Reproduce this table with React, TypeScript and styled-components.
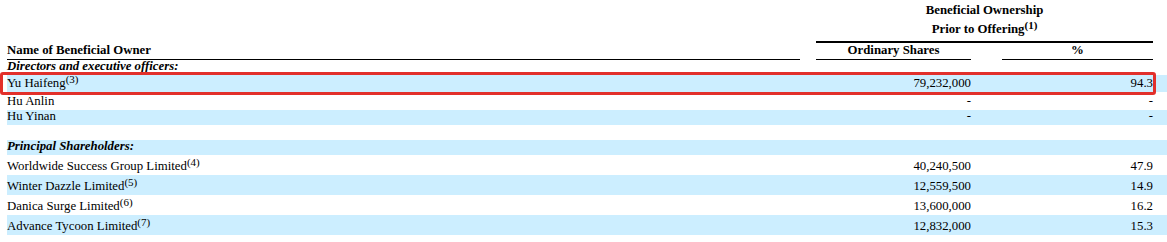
import React from "react";
import styled, { createGlobalStyle } from "styled-components";

const Global = createGlobalStyle`
  html, body { margin: 0; padding: 0; background: #fff; }
  body { font-family: "Liberation Serif", "Times New Roman", serif; color: #000; }
`;

const Page = styled.div`
  position: relative;
  padding: 0 0 0 7px;
  width: 1160px;
`;

const Table = styled.table`
  width: 1160px;
  border-collapse: collapse;
  border-spacing: 0;
  font-size: 12.8px;
  line-height: 15px;
  table-layout: fixed;
`;

const Cell = styled.td<{ $align?: "left" | "right" | "center"; $bold?: boolean; $italic?: boolean }>`
  padding: 0;
  vertical-align: bottom;
  text-align: ${(p) => p.$align ?? "left"};
  font-weight: ${(p) => (p.$bold ? 700 : 400)};
  font-style: ${(p) => (p.$italic ? "italic" : "normal")};
  white-space: nowrap;
`;

const HeadCell = styled(Cell)<{ $rule?: number }>`
  padding-bottom: 1px;
  border-bottom: ${(p) => (p.$rule ? `${p.$rule}px solid #000` : "none")};
`;

const TopHead = styled(HeadCell)`
  padding: 3px 0 4px;
`;

const HeadLine = styled.span<{ $tall?: boolean }>`
  display: block;
  padding-top: ${(p) => (p.$tall ? "4px" : "0")};
`;

const Row = styled.tr<{ $shaded?: boolean; $h: number }>`
  height: ${(p) => p.$h}px;
  background: ${(p) => (p.$shaded ? "#cceeff" : "transparent")};
  & > td {
    line-height: 13px;
    padding-bottom: 2px;
  }
`;

const Sup = styled.sup`
  font-size: 11px;
  line-height: 0;
  vertical-align: 4px;
`;

const Highlight = styled.div`
  position: absolute;
  left: 0;
  top: 72px;
  width: 1156px;
  height: 23px;
  box-sizing: border-box;
  border: 3px solid #e2302b;
  border-radius: 3px;
  pointer-events: none;
`;

type Holder = { name: string; note?: string; shares: string; pct: string; h: number };

const directors: Holder[] = [
  { name: "Yu Haifeng", note: "(3)", shares: "79,232,000", pct: "94.3", h: 17 },
  { name: "Hu Anlin", shares: "-", pct: "-", h: 18 },
  { name: "Hu Yinan", shares: "-", pct: "-", h: 15 },
];

const principals: Holder[] = [
  { name: "Worldwide Success Group Limited", note: "(4)", shares: "40,240,500", pct: "47.9", h: 20 },
  { name: "Winter Dazzle Limited", note: "(5)", shares: "12,559,500", pct: "14.9", h: 20 },
  { name: "Danica Surge Limited", note: "(6)", shares: "13,600,000", pct: "16.2", h: 20 },
  { name: "Advance Tycoon Limited", note: "(7)", shares: "12,832,000", pct: "15.3", h: 20 },
];

const HolderRow = ({ h, shaded }: { h: Holder; shaded: boolean }) => (
  <Row $shaded={shaded} $h={h.h}>
    <Cell>
      {h.name}
      {h.note && <Sup>{h.note}</Sup>}
    </Cell>
    <Cell />
    <Cell $align="right">{h.shares}</Cell>
    <Cell />
    <Cell $align="right">{h.pct}</Cell>
    <Cell />
  </Row>
);

const SectionRow = ({ label, shaded }: { label: string; shaded?: boolean }) => (
  <Row $shaded={shaded} $h={15}>
    <Cell $bold $italic>{label}</Cell>
    <Cell />
    <Cell />
    <Cell />
    <Cell />
    <Cell />
  </Row>
);

export default function App() {
  return (
    <>
      <Global />
      <Page>
        <Table>
          <colgroup>
            <col style={{ width: 793 }} />
            <col style={{ width: 16 }} />
            <col style={{ width: 155 }} />
            <col style={{ width: 31 }} />
            <col style={{ width: 151 }} />
            <col style={{ width: 14 }} />
          </colgroup>
          <tbody>
            <tr>
              <Cell />
              <Cell />
              <TopHead colSpan={3} $align="center" $bold $rule={2}>
                <HeadLine>Beneficial Ownership</HeadLine>
                <HeadLine $tall>
                  Prior to Offering<Sup>(1)</Sup>
                </HeadLine>
              </TopHead>
              <Cell />
            </tr>
            <tr>
              <HeadCell $bold $rule={1}>Name of Beneficial Owner</HeadCell>
              <Cell />
              <HeadCell $bold $align="center" $rule={1}>Ordinary Shares</HeadCell>
              <Cell />
              <HeadCell $bold $align="center" $rule={1}>%</HeadCell>
              <Cell />
            </tr>
            <SectionRow label="Directors and executive officers:" />
            {directors.map((h, i) => (
              <HolderRow key={h.name} h={h} shaded={i % 2 === 0} />
            ))}
            <Row $h={15}>
              <Cell colSpan={6} />
            </Row>
            <SectionRow label="Principal Shareholders:" shaded />
            {principals.map((h, i) => (
              <HolderRow key={h.name} h={h} shaded={i % 2 === 1} />
            ))}
          </tbody>
        </Table>
        <Highlight />
      </Page>
    </>
  );
}
